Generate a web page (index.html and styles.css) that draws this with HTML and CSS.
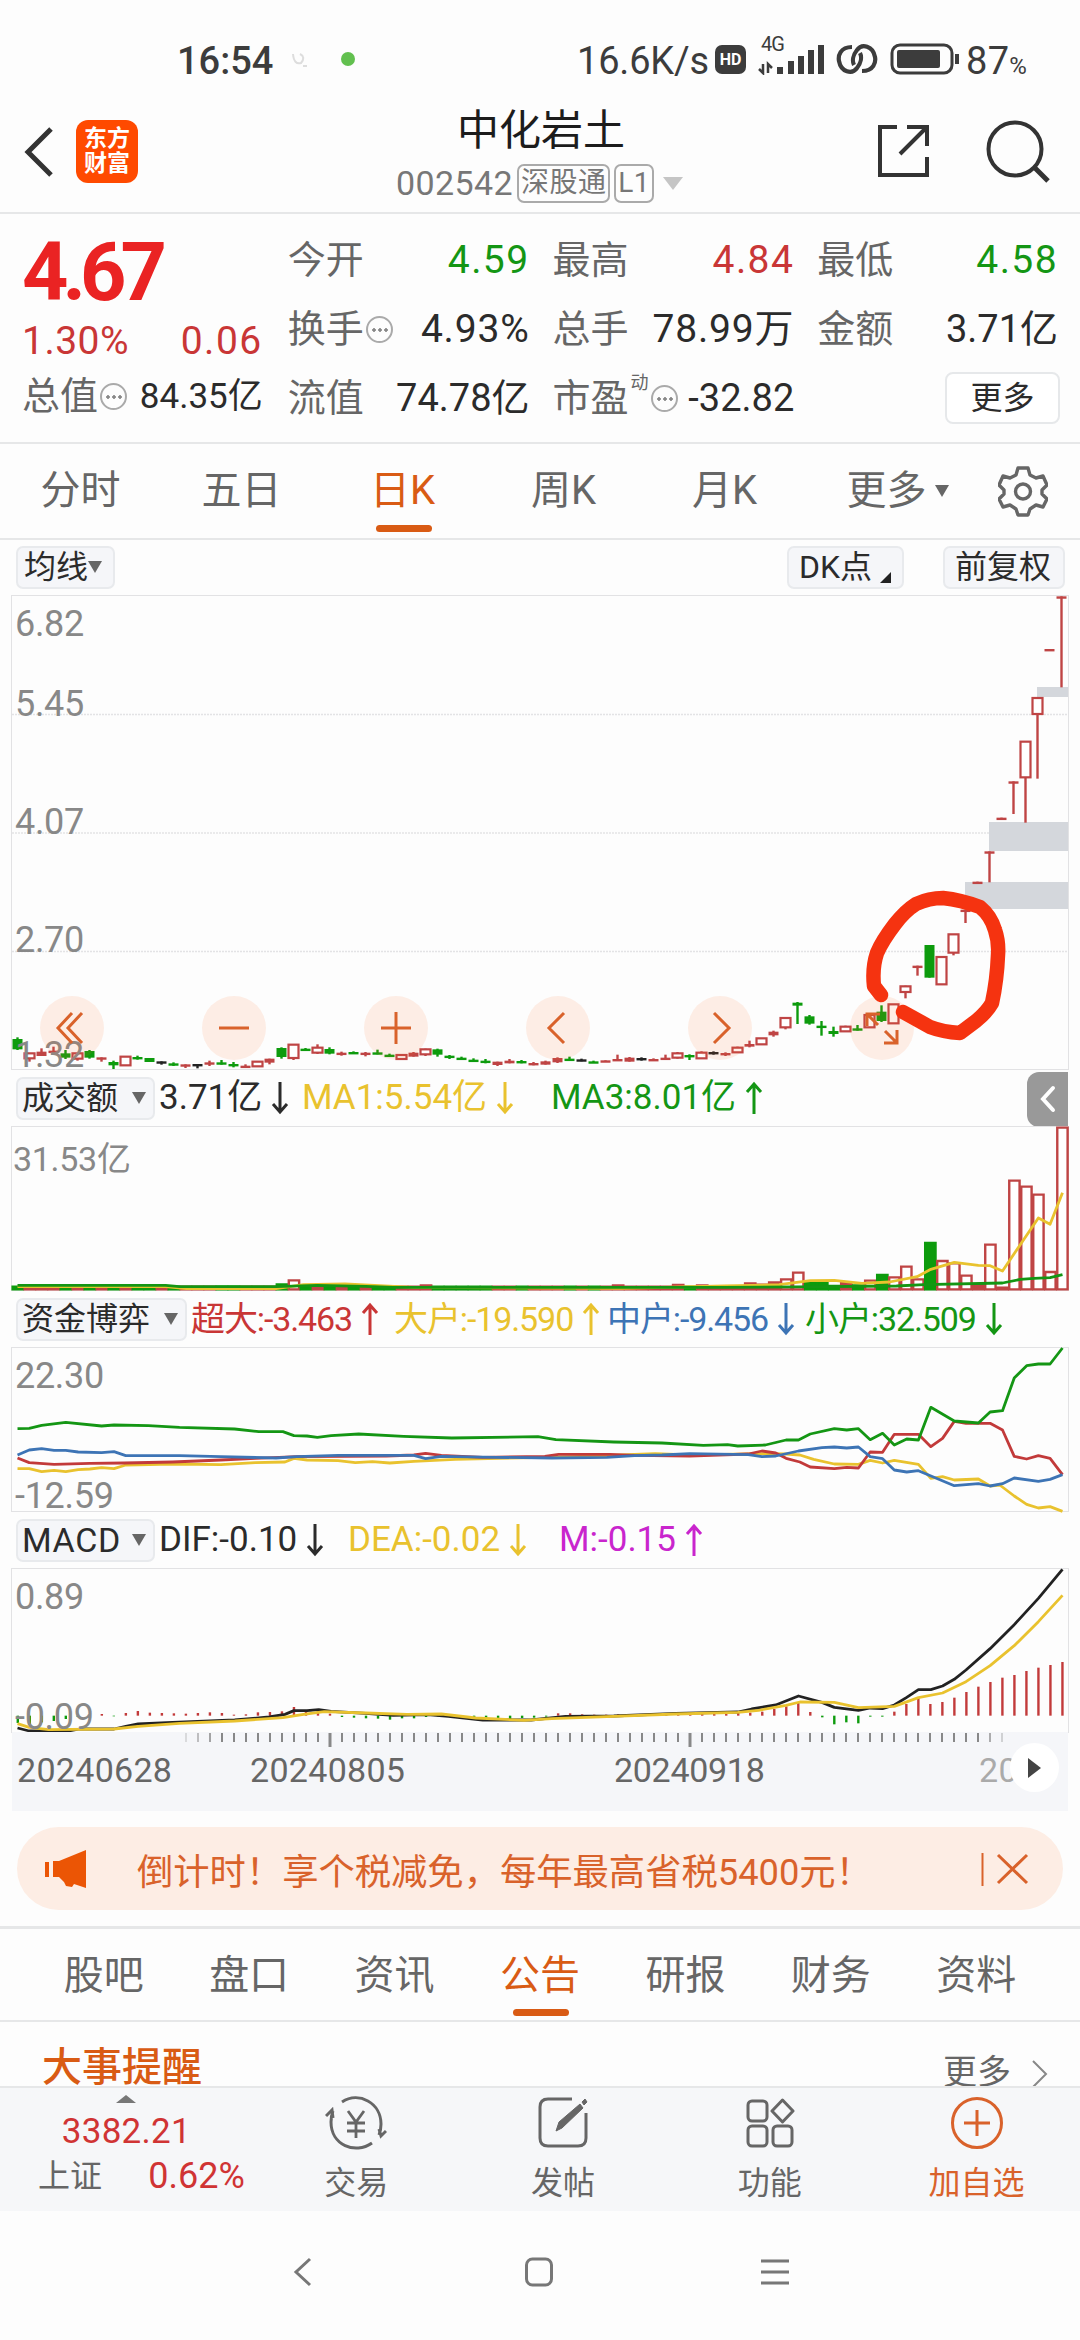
FILE: index.html
```html
<!DOCTYPE html>
<html lang="zh-CN">
<head>
  <meta charset="UTF-8" />
  <meta name="viewport" content="width=device-width, initial-scale=1.0"/>
  <title>中化岩土 002542</title>
  <link rel="stylesheet" href="styles.css">
</head>
<body>

<svg class="defs" width="0" height="0">
  <symbol id="down" viewBox="0 0 18 34"><path d="M9 1v30M2 23l7 8 7-8"/></symbol>
  <symbol id="up" viewBox="0 0 18 34"><path d="M9 33V3M2 11l7-8 7 8"/></symbol>
</svg>

<!-- System status -->
<div class="status-bar">
  <span class="clock">16:54</span>
  <svg class="status-dots" width="70" height="30" viewBox="0 0 70 30">
    <path d="M7 9 Q8 20 15 18 Q20 12 14 9 M17 21h4" fill="none" stroke="#ddd" stroke-width="2"/>
    <circle cx="62" cy="14" r="7" fill="#62c04f"/>
  </svg>
  <span class="speed">16.6K/s</span>
  <span class="hd">HD</span>
  <div class="signal">
    <span>4G</span>
    <svg width="68" height="32" viewBox="0 0 68 32">
      <path d="M5 21v9l-4-4M10 30v-9l4 4" fill="none" stroke="#3c3c3c" stroke-width="2.5"/>
      <path d="M22 31v-7M33 31V18M43 31V13M53 31V7M63 31V2" fill="none" stroke="#3c3c3c" stroke-width="6"/>
    </svg>
  </div>
  <svg class="link" width="42" height="30" viewBox="0 0 42 30">
    <path d="M16 3C4 3 2 12 3 17 5 28 16 31 21 24 25 19 26 13 24 9M26 27C38 27 40 18 39 13 37 2 26-1 21 6 17 11 16 17 18 21" fill="none" stroke="#3c3c3c" stroke-width="4.2"/>
  </svg>
  <svg class="battery" width="70" height="32" viewBox="0 0 70 32">
    <rect x="2" y="2" width="60" height="28" rx="8" fill="none" stroke="#3c3c3c" stroke-width="3"/>
    <rect x="7" y="7" width="43" height="18" rx="2" fill="#3c3c3c"/>
    <path d="M67 11v10" stroke="#3c3c3c" stroke-width="4"/>
  </svg>
  <span class="percent">87<small>%</small></span>
</div>

<!-- Stock title -->
<div class="header">
  <svg class="back" width="36" height="56" viewBox="0 0 36 56">
    <path d="M30 5 7 28l23 23" fill="none" stroke="#333" stroke-width="5"/>
  </svg>
  <div class="logo"><span>东方</span><span>财富</span></div>
  <div class="title">
    <h1>中化岩土</h1>
    <div class="code">
      <span>002542</span><span class="tag">深股通</span><span class="tag">L1</span><i class="tri tri-light"></i>
    </div>
  </div>
  <svg class="share" width="56" height="56" viewBox="0 0 56 56">
    <path d="M21 4H4v48h47V34M31 4h20v19M51 4 24 31" fill="none" stroke="#333" stroke-width="4"/>
  </svg>
  <svg class="search" width="66" height="66" viewBox="0 0 66 66">
    <circle cx="29" cy="30" r="26.5" fill="none" stroke="#333" stroke-width="4"/>
    <path d="M48 48 62 62" stroke="#333" stroke-width="5"/>
  </svg>
</div>

<!-- Quote numbers -->
<div class="quote">
  <div class="price">
    <strong>4.67</strong>
    <div class="change"><span>1.30%</span><span>0.06</span></div>
    <div class="cell small"><label>总值</label><i class="more-dot"></i><b>84.35亿</b></div>
  </div>
  <div class="col">
    <div class="cell"><label>今开</label><b class="down">4.59</b></div>
    <div class="cell"><label>换手</label><i class="more-dot"></i><b>4.93%</b></div>
    <div class="cell"><label>流值</label><b class="tight">74.78亿</b></div>
  </div>
  <div class="col">
    <div class="cell"><label>最高</label><b class="up">4.84</b></div>
    <div class="cell"><label>总手</label><b>78.99万</b></div>
    <div class="cell"><label>市盈</label><sup>动</sup><i class="more-dot"></i><b class="tight">-32.82</b></div>
  </div>
  <div class="col last">
    <div class="cell"><label>最低</label><b class="down">4.58</b></div>
    <div class="cell"><label>金额</label><b class="tight">3.71亿</b></div>
    <div class="cell"><button class="more-btn">更多</button></div>
  </div>
</div>

<div class="period-tabs">
  <span>分时</span>
  <span>五日</span>
  <span class="active">日K</span>
  <span>周K</span>
  <span>月K</span>
  <span>更多<i class="tri"></i></span>
  <svg width="50" height="52" viewBox="0 0 50 52">
    <path d="M20 3h10l2 7 6 3 7-2 4 9-5 5v4l5 5-4 8-7-2-6 4-2 6H20l-2-6-6-4-7 2-4-8 5-5v-4l-5-5 4-9 7 2 6-3z" fill="none" stroke="#666" stroke-width="3.4" stroke-linejoin="round"/>
    <circle cx="25" cy="26.5" r="7.5" fill="none" stroke="#666" stroke-width="3.4"/>
  </svg>
</div>

<div class="tools">
  <button class="chip">均线<i class="tri"></i></button>
  <button class="chip dk">DK点<i class="corner"></i></button>
  <button class="chip fq">前复权</button>
</div>

<!-- Candles -->
<div class="chart kline">
  <svg id="kline" width="1056" height="473"></svg>
  <div class="y-labels">
    <span>6.82</span><span>5.45</span><span>4.07</span><span>2.70</span><span>1.32</span>
  </div>
  <div class="chart-buttons">
    <svg viewBox="0 0 64 64"><path d="M32 17 18 32l14 15M42 17 28 32l14 15"/></svg>
    <svg viewBox="0 0 64 64"><path d="M17 32h30"/></svg>
    <svg viewBox="0 0 64 64"><path d="M17 32h30M32 16v32"/></svg>
    <svg viewBox="0 0 64 64"><path d="M38 17 23 32l15 15"/></svg>
    <svg viewBox="0 0 64 64"><path d="M26 17l15 15-15 15"/></svg>
    <svg viewBox="0 0 64 64"><path d="M28 29 17 18M17 30V18h13M35 35l12 12M47 34v13H34"/></svg>
  </div>
  <svg class="marker" width="1056" height="473" viewBox="12 596 1056 473">
    <path d="M881 995 874 986Q872 968 877 953 882 941 895 924 905 911 916 904 929 898 943 898 961 900 980 907 991 916 995 930 999 942 998 955 997 980 992 1003 987 1012 976 1021L960 1033Q943 1032 930 1027L903 1012"/>
  </svg>
</div>

<!-- Turnover -->
<div class="indicator">
  <button class="chip">成交额<i class="tri"></i></button>
  <span class="v1">3.71亿<svg><use href="#down"/></svg></span>
  <span class="v2 yellow">MA1:5.54亿<svg><use href="#down"/></svg></span>
  <span class="v3 green">MA3:8.01亿<svg><use href="#up"/></svg></span>
  <div class="handle">
    <svg width="20" height="30" viewBox="0 0 20 30"><path d="M15 4 5 15l10 11" fill="none" stroke="#fff" stroke-width="4" stroke-linecap="round"/></svg>
  </div>
</div>
<div class="chart">
  <svg id="volume" width="1056" height="163" viewBox="17 51 1532 489" preserveAspectRatio="none">
    <g id="volumeBars"></g>
    <polyline class="line yellow-line" points="25,530 240,530 270,536 400,536 440,524 500,522 550,527 600,532 900,535 1050,528 1130,524 1175,512 1210,511 1250,520 1290,516 1330,500 1350,478 1384,457 1419,466 1436,467 1454,483 1506,324 1523,343 1541,248"/>
    <polyline class="line green-line" points="25,526 240,526 260,530 400,530 460,526 530,529 570,532 1050,532 1200,530 1300,528 1340,524 1454,519 1480,508 1500,505 1523,503 1541,494"/>
  </svg>
  <div class="y-labels turnover"><span>31.53亿</span></div>
</div>

<!-- Capital flow -->
<div class="indicator flow">
  <button class="chip">资金博弈<i class="tri"></i></button>
  <span class="f1 red">超大:-3.463<svg><use href="#up"/></svg></span>
  <span class="f2 yellow">大户:-19.590<svg><use href="#up"/></svg></span>
  <span class="f3 blue">中户:-9.456<svg><use href="#down"/></svg></span>
  <span class="f4 green">小户:32.509<svg><use href="#down"/></svg></span>
</div>
<div class="chart">
  <svg width="1056" height="163" viewBox="17 24 1532 489" preserveAspectRatio="none">
    <polyline class="line yellow-line" points="25,386 42,386 60,395 78,391 95,395 113,389 130,387 147,383 165,386 182,375 250,372 320,374 370,368 413,366 426,355 445,360 490,362 515,368 540,365 565,369 600,364 660,358 790,352 830,350 900,345 950,341 1000,345 1050,343 1100,341 1140,342 1160,345 1180,358 1210,372 1245,373 1262,361 1280,369 1297,361 1332,373 1350,415 1367,410 1384,420 1419,417 1436,438 1450,435 1471,468 1489,493 1506,504 1523,500 1541,514"/>
    <polyline class="line red-line" points="25,354 42,368 78,373 130,370 180,369 250,366 320,360 370,355 430,350 500,349 560,348 600,345 617,340 640,346 700,352 790,349 810,343 885,343 920,346 1000,348 1085,342 1105,333 1125,339 1140,355 1160,366 1175,381 1210,386 1228,382 1245,384 1262,336 1280,337 1297,283 1332,283 1350,320 1367,295 1384,244 1401,250 1436,250 1454,270 1471,349 1489,357 1506,347 1523,355 1541,404"/>
    <polyline class="line blue-line" points="25,345 42,330 60,326 78,331 95,331 113,336 147,338 165,335 182,347 260,347 320,350 400,354 430,350 490,346 560,346 600,346 617,356 640,349 720,352 800,354 880,352 920,347 960,345 1000,341 1085,344 1105,350 1125,348 1158,333 1192,323 1210,321 1228,324 1245,321 1262,350 1280,356 1297,390 1315,396 1332,392 1384,437 1419,431 1436,438 1454,431 1471,414 1506,424 1523,418 1541,404"/>
    <polyline class="line green-line" points="25,266 42,265 60,256 95,247 147,258 165,255 215,257 260,262 340,267 375,275 410,275 426,287 445,288 460,292 480,287 520,282 585,289 655,294 780,290 806,299 890,306 960,309 1020,316 1055,314 1070,318 1110,315 1140,300 1158,300 1175,282 1210,266 1228,270 1245,266 1262,299 1280,280 1297,315 1315,297 1332,300 1350,202 1384,243 1419,249 1436,216 1454,212 1471,114 1489,77 1506,72 1523,72 1541,24"/>
  </svg>
  <div class="y-labels two"><span>22.30</span><span>-12.59</span></div>
</div>

<!-- MACD -->
<div class="indicator macd">
  <button class="chip">MACD<i class="tri"></i></button>
  <span class="m1">DIF:-0.10<svg><use href="#down"/></svg></span>
  <span class="m2 yellow">DEA:-0.02<svg><use href="#down"/></svg></span>
  <span class="m3 magenta">M:-0.15<svg><use href="#up"/></svg></span>
</div>
<div class="chart">
  <svg width="1056" height="163" viewBox="17 58 1532 489" preserveAspectRatio="none">
    <g id="macdBars"></g>
    <polyline class="line black-line" points="25,535 42,544 100,544 115,538 165,538 182,530 200,523 250,518 340,511 390,502 413,494 426,483 445,483 462,480 480,485 530,491 570,497 620,495 650,500 700,511 770,511 820,500 890,499 980,491 1070,487 1090,478 1125,466 1158,439 1192,458 1210,473 1245,482 1262,475 1280,477 1297,466 1315,443 1332,420 1350,420 1367,409 1384,389 1401,361 1436,297 1471,225 1506,146 1541,59"/>
    <polyline class="line yellow-line" points="25,522 42,533 70,540 165,538 200,530 260,521 340,514 410,504 440,494 470,486 530,490 590,494 640,493 690,505 760,512 800,507 890,500 980,493 1070,488 1100,482 1140,467 1160,457 1210,458 1245,474 1297,470 1332,444 1367,430 1401,396 1436,348 1471,288 1506,216 1541,137"/>
  </svg>
  <div class="y-labels two"><span>0.89</span><span>-0.09</span></div>
</div>
<div class="axis">
  <svg id="ticks" width="1056" height="16"></svg>
  <div class="dates">
    <span>20240628</span><span>20240805</span><span>20240918</span><span class="next">20</span>
  </div>
  <div class="play"><i></i></div>
</div>

<div class="promo">
  <svg width="42" height="40" viewBox="0 0 42 40">
    <path d="M2 13v15" stroke="#eb5505" stroke-width="4"/>
    <path d="M8 12h6L41 1v38l-12-4-2 3-6-1-2-4-5-5H8z" fill="#eb5505"/>
  </svg>
  <span>倒计时！享个税减免，每年最高省税5400元！</span>
  <svg class="close" width="50" height="36" viewBox="0 0 50 36">
    <path d="M1.5 2v33" stroke="#d9622b" stroke-width="2"/>
    <path d="M17 4l29 28M46 4 17 32" stroke="#d9622b" stroke-width="3"/>
  </svg>
</div>

<div class="info-tabs">
  <span>股吧</span>
  <span>盘口</span>
  <span>资讯</span>
  <span class="active">公告</span>
  <span>研报</span>
  <span>财务</span>
  <span>资料</span>
</div>

<div class="events">
  <h2>大事提醒</h2>
  <span>更多</span>
  <svg width="20" height="32" viewBox="0 0 20 32"><path d="M3 3l13 13L3 29" fill="none" stroke="#888" stroke-width="2"/></svg>
</div>

<div class="bottom-bar">
  <div class="index">
    <i></i>
    <strong>3382.21</strong>
    <div><span>上证</span><b>0.62%</b></div>
  </div>
  <div class="item">
    <svg width="62" height="56" viewBox="0 0 62 56">
      <path d="M17 7C34-4 56 8 56 29q0 6-2 11M47 48C30 60 6 50 6 27q0-6 2-11M1 21l6-6 1 8M61 36l-5 5-2-7" fill="none" stroke="#666" stroke-width="3"/>
      <path d="M23 16l8 11 8-11M31 27v16M22 28h18M22 36h18" fill="none" stroke="#666" stroke-width="2.8"/>
    </svg>
    <span>交易</span>
  </div>
  <div class="item">
    <svg width="54" height="56" viewBox="0 0 54 56">
      <path d="M36 4H12q-8 0-8 8v31q0 8 8 8h30q8 0 8-8V18" fill="none" stroke="#666" stroke-width="3"/>
      <path d="M20 36l3-9L44 9l3 4-21 20zM46 7l3-3 2 3-3 3z" fill="#666" stroke="#666"/>
    </svg>
    <span>发帖</span>
  </div>
  <div class="item">
    <svg width="50" height="56" viewBox="0 0 50 56" fill="none" stroke="#666" stroke-width="3">
      <rect x="3" y="6" width="19" height="20" rx="4"/>
      <rect x="3" y="31" width="19" height="20" rx="4"/>
      <rect x="28" y="31" width="19" height="20" rx="4"/>
      <path d="M37.5 5 48 16 37.5 27 27 16z" stroke-linejoin="round"/>
    </svg>
    <span>功能</span>
  </div>
  <div class="item add">
    <svg width="54" height="56" viewBox="0 0 54 56" fill="none" stroke="#d9622b" stroke-width="3">
      <circle cx="27" cy="28" r="24.5"/>
      <path d="M14 28h26M27 15v26"/>
    </svg>
    <span>加自选</span>
  </div>
</div>

<div class="system-nav">
  <svg width="20" height="30" viewBox="0 0 20 30"><path d="M17 2 3 15l14 13"/></svg>
  <svg width="28" height="30" viewBox="0 0 28 30"><rect x="1.5" y="2" width="25" height="26" rx="6"/></svg>
  <svg width="28" height="30" viewBox="0 0 28 30"><path d="M0 4h28M0 15h28M0 26h28"/></svg>
</div>

<script src="script.js"></script>
</body>
</html>
```
FILE: styles.css
```css
:root {
  --orange: #d9622b;
  --red: #c93636;
  --green: #149614;
  --yellow: #e9c22e;
  --blue: #3d74b5;
  --text: #2b2b2b;
  --muted: #666;
  --line: #e6e7e8;
  --soft: #f5f6f9;
}

* { box-sizing: border-box; }

body {
  margin: 0;
  width: 1080px;
  height: 2340px;
  overflow: hidden;
  background: #fdfdfd;
  color: var(--text);
  font-family: Roboto, "Noto Sans CJK SC", sans-serif;
}

svg { display: block; flex: none; }
i { font-style: normal; }
b { font-weight: 400; }
h1, h2 { margin: 0; font-weight: 400; }
button { font-family: inherit; color: inherit; padding: 0; }
.defs { position: absolute; }

.red, .up { color: var(--red); }
.green, .down { color: var(--green); }
.yellow { color: var(--yellow); }
.blue { color: var(--blue); }
.magenta { color: #c925cd; }

.tri {
  display: inline-block;
  border: 7px solid transparent;
  border-top: 12px solid var(--muted);
  border-bottom: 0;
}

/* Status bar */
.status-bar {
  height: 110px;
  padding: 11px 0 0 177px;
  display: flex;
  align-items: center;
  font-size: 38px;
  color: #3c3c3c;
  white-space: nowrap;
}
.clock { width: 109px; font-weight: 500; }
.status-dots { margin-top: -2px; }
.speed { margin-left: 221px; width: 138px; letter-spacing: -0.2px; }
.hd {
  width: 31px;
  height: 29px;
  margin-top: -3px;
  border-radius: 7px;
  background: #3c3c3c;
  color: #fff;
  font-size: 16px;
  font-weight: 700;
  line-height: 30px;
  text-align: center;
}
.signal { width: 90px; height: 40px; padding-left: 12px; margin-top: -13px; }
.signal span { display: block; height: 9px; font-size: 20px; line-height: 20px; letter-spacing: -1px; margin-left: 3px; }
.link { margin-top: -3px; }
.battery { margin: -3px 0 0 12px; }
.percent { margin-left: 6px; letter-spacing: 0.3px; }
.percent small { font-size: 24px; }

/* Header */
.header {
  height: 104px;
  border-bottom: 2px solid var(--line);
  display: flex;
  align-items: flex-start;
}
.back { margin: 14px 0 0 21px; }
.logo {
  width: 62px;
  height: 63px;
  margin: 10px 0 0 19px;
  padding-top: 6px;
  border-radius: 12px;
  background: #ff4a00;
  color: #fff;
  display: flex;
  flex-direction: column;
  align-items: center;
  font-size: 23px;
  font-weight: 700;
  line-height: 25px;
}
.title { width: 540px; margin-left: 133px; text-align: center; }
.title h1 { font-size: 42px; line-height: 42px; color: #1c1c1c; }
.code {
  height: 40px;
  margin: 11px 0 0 -3px;
  display: flex;
  align-items: center;
  justify-content: center;
  font-size: 34px;
  letter-spacing: 0.4px;
  color: #777;
}
.code .tag {
  height: 39px;
  margin-left: 4px;
  padding: 0 2px;
  border: 2px solid #aaa;
  border-radius: 7px;
  font-size: 28px;
  line-height: 34px;
}
.code .tri-light { margin-left: 9px; border-width: 13px 10px 0; border-top-color: #c5c5c5; }
.share { margin: 13px 0 0 65px; }
.search { margin: 9px 0 0 54px; }

/* Quote */
.quote {
  height: 230px;
  padding: 12px 22px 0 22px;
  border-bottom: 2px solid var(--line);
  display: flex;
}
.price { width: 241px; margin-right: 25px; color: var(--red); }
.price strong {
  display: block;
  height: 92px;
  font-size: 81px;
  line-height: 94px;
  letter-spacing: -6px;
  color: #ea2323;
}
.change { height: 44px; display: flex; justify-content: space-between; font-size: 39px; line-height: 46px; letter-spacing: 0.5px; }
.change span + span { letter-spacing: 1.5px; }
.col { width: 242px; margin-right: 23px; }
.col.last { width: 241px; margin: 0; }
.cell {
  height: 69px;
  display: flex;
  align-items: center;
  font-size: 38px;
  line-height: 69px;
  color: var(--text);
}
.cell label { color: var(--muted); }
.cell b { margin-left: auto; font-size: 39px; letter-spacing: 0.8px; }
.cell b.up { color: var(--red); letter-spacing: 1.4px; }
.cell b.down { color: var(--green); letter-spacing: 1.4px; }
.cell b.tight { font-size: 38px; letter-spacing: 0; }
.cell sup { margin: -32px 0 0 2px; font-size: 18px; line-height: 20px; color: var(--muted); }
.cell.small b { font-size: 35px; letter-spacing: 0; }
.more-dot {
  width: 27px;
  height: 27px;
  margin-left: 2px;
  border: 2px solid #aaa;
  border-radius: 50%;
  background:
    radial-gradient(circle at 6px 12px, #888 1.5px, transparent 2px),
    radial-gradient(circle at 12px 12px, #888 1.5px, transparent 2px),
    radial-gradient(circle at 18px 12px, #888 1.5px, transparent 2px);
}
.more-btn {
  width: 115px;
  height: 52px;
  margin: -2px -2px 0 auto;
  border: 2px solid #e6e8ea;
  border-radius: 8px;
  background: #fff;
  font-size: 32px;
  line-height: 48px;
}

/* Period tabs */
.period-tabs {
  height: 96px;
  border-bottom: 2px solid var(--line);
  display: grid;
  grid-template-columns: repeat(6, 161px) 1fr;
  align-items: center;
  text-align: center;
  font-size: 40px;
  line-height: 94px;
  color: var(--muted);
}
.period-tabs .tri { margin: 0 -24px 7px 8px; }
.period-tabs svg { margin-left: 32px; }
.active { color: #d95b14; position: relative; }
.active::after {
  content: '';
  position: absolute;
  left: 50%;
  bottom: 6px;
  width: 56px;
  height: 7px;
  margin-left: -27px;
  border-radius: 4px;
  background: #d95b14;
}

.chip {
  height: 43px;
  padding: 0 8px 0 7px;
  border: 2px solid #e8eaed;
  border-radius: 7px;
  background: var(--soft);
  display: flex;
  align-items: center;
  font-size: 32px;
  line-height: 38px;
  white-space: nowrap;
}
.tools { height: 56px; padding: 0 15px 2px 16px; display: flex; align-items: center; }
.tools .chip { width: 99px; padding: 0 6px; }
.tools .dk { width: 117px; margin-left: auto; padding: 0 10px; }
.tools .fq { width: 122px; margin-left: 39px; padding: 0 10px; }
.corner {
  margin: 20px 0 0 8px;
  border-left: 11px solid transparent;
  border-bottom: 11px solid #222;
}

/* Charts */
.chart { width: 1056px; height: 163px; margin-left: 12px; position: relative; box-shadow: 0 0 0 1px #e2e2e4; }
.kline { height: 473px; }
.chart > svg { overflow: visible; }
.line { fill: none; stroke-width: 2.8; vector-effect: non-scaling-stroke; stroke-linejoin: round; }
.yellow-line { stroke: var(--yellow); }
.green-line { stroke: #149614; }
.red-line { stroke: #c23a3a; }
.blue-line { stroke: #3d74b5; }
.black-line { stroke: #222; }

.y-labels {
  position: absolute;
  top: 10px;
  left: 3px;
  font-size: 36px;
  line-height: 36px;
  letter-spacing: -0.3px;
  color: #888;
}
.y-labels span { display: block; }
.kline .y-labels span + span { margin-top: 82px; }
.kline .y-labels span:nth-child(2) { margin-top: 44px; }
.kline .y-labels span:last-child { margin-top: 79px; }
.y-labels.turnover { top: 14px; left: 1px; font-size: 34px; }
.two span + span { margin-top: 84px; }

.chart-buttons {
  position: absolute;
  top: 400px;
  left: 28px;
  width: 874px;
  display: flex;
  justify-content: space-between;
}
.chart-buttons svg {
  width: 64px;
  height: 64px;
  border-radius: 50%;
  background: rgba(255, 110, 40, 0.11);
  fill: none;
  stroke: var(--orange);
  stroke-width: 3;
}
.marker { position: absolute; top: 0; left: 0; fill: none; stroke: #f53310; stroke-width: 14.5; stroke-linecap: round; stroke-linejoin: round; }

.indicator {
  height: 58px;
  padding-left: 16px;
  display: flex;
  align-items: center;
  font-size: 35px;
  line-height: 46px;
  white-space: nowrap;
}
.indicator .chip { width: 139px; margin-right: 4px; justify-content: space-between; padding: 0 7px 0 4px; }
.indicator span { display: flex; align-items: center; }
.indicator span svg { width: 18px; height: 34px; margin-left: 9px; fill: none; stroke: currentColor; stroke-width: 3; }
.v1 { width: 143px; }
.v2 { width: 249px; }
.handle {
  width: 41px;
  height: 55px;
  margin: 2px 12px 0 auto;
  border-radius: 12px 0 0 12px;
  background: #999;
  display: flex;
  align-items: center;
  justify-content: center;
}
.flow { font-size: 34px; letter-spacing: -1.1px; }
.flow .chip { width: 171px; letter-spacing: 0; }
.f1 { width: 203px; }
.f2 { width: 213px; }
.f3 { width: 198px; }
.macd .chip { font-size: 34px; letter-spacing: 0.6px; }
.m1 { width: 189px; }
.m2 { width: 211px; }

.axis { width: 1056px; height: 79px; margin-left: 12px; background: var(--soft); position: relative; }
.dates { display: flex; font-size: 34px; line-height: 40px; letter-spacing: 0.3px; color: var(--muted); padding: 2px 0 0 5px; }
.dates span { width: 233px; }
.dates span:nth-child(2) { width: 364px; }
.dates span:nth-child(3) { width: 365px; letter-spacing: -0.3px; }
.dates .next { width: 42px; color: #aaa; }
.play {
  position: absolute;
  top: 11px;
  right: 9px;
  width: 49px;
  height: 49px;
  border-radius: 50%;
  background: #fff;
  display: flex;
  align-items: center;
  justify-content: center;
}
.play i { border: 10px solid transparent; border-left: 13px solid #444; border-right: 0; }

/* Promo */
.promo {
  width: 1046px;
  height: 83px;
  margin: 16px 0 0 17px;
  padding: 0 32px 0 28px;
  border-radius: 42px;
  background: #fdede4;
  display: flex;
  align-items: center;
  font-size: 36.3px;
  color: var(--orange);
  white-space: nowrap;
}
.promo span { margin-left: 50px; }
.promo .close { margin-left: auto; }

/* Info tabs */
.info-tabs {
  height: 96px;
  margin-top: 16px;
  padding: 0 31px;
  border-top: 3px solid var(--line);
  border-bottom: 2px solid var(--line);
  display: grid;
  grid-template-columns: repeat(7, 1fr);
  text-align: center;
  font-size: 40px;
  line-height: 93px;
  color: var(--muted);
}

.events { height: 64px; padding: 28px 30px 0 42px; display: flex; }
.events h2 { font-size: 40px; line-height: 36px; font-weight: 500; color: #d95b14; }
.events span { margin-left: auto; font-size: 34px; line-height: 44px; color: var(--muted); }
.events svg { margin: 8px 0 0 19px; }

/* Bottom bar */
.bottom-bar {
  height: 125px;
  border-top: 2px solid var(--line);
  background: #f6f7f9;
  display: flex;
  position: relative;
}
.index { width: 253px; text-align: center; color: #d03434; }
.index > i { display: block; width: 0; margin: 7px auto 0; border: 10px solid transparent; border-top: 0; border-bottom: 8px solid #777; }
.index strong { display: block; margin-top: 8px; font-size: 35px; line-height: 42px; font-weight: 400; letter-spacing: 0.3px; }
.index div { display: flex; justify-content: space-between; padding: 0 8px 0 38px; font-size: 36px; line-height: 46px; }
.index div span { font-size: 32px; color: var(--muted); }
.item {
  width: 207px;
  padding-top: 7px;
  display: flex;
  flex-direction: column;
  align-items: center;
  font-size: 32px;
  line-height: 40px;
  color: var(--muted);
}
.item span { margin-top: 12px; }
.item.add { color: var(--orange); }

.system-nav { height: 129px; padding: 46px 0 0 293px; display: flex; }
.system-nav svg { fill: none; stroke: #777; stroke-width: 3; }
.system-nav svg + svg { margin-left: 212px; }
.system-nav svg:last-child { margin-left: 208px; }
```
FILE: script.js
```js
const NS = 'http://www.w3.org/2000/svg';
const STEP = 12;
const COLORS = { r: '#bf4444', g: '#0d9b0d', k: '#222' };

function add(parent, tag, attrs) {
  const el = document.createElementNS(NS, tag);
  for (const key in attrs) el.setAttribute(key, attrs[key]);
  parent.appendChild(el);
}

// color, body top, body bottom, high, low, hollow (y measured in thirds of a pixel from 364px down the chart)
const candles = [
  ['g',237,268,232,270],['r',280,295,280,305,1],['r',275,288,265,288],['r',272,278,260,280],['g',280,293,270,297],
  ['r',280,296,280,302,1],['g',273,293,270,296],['r',292,298,292,305],['g',306,316,302,327],['r',290,316,288,316,1],
  ['g',291,296,287,299],['g',294,306,294,306],['k',304,309,304,314],['g',310,315,307,318],['r',313,319,313,324],
  ['k',312,318,312,325],['r',307,312,302,318],['g',307,314,300,314],['g',312,318,306,322],['r',317,323,313,323],
  ['r',305,319,303,319,1],['r',296,308,296,313],['g',264,291,262,296],['r',254,294,254,300,1],['g',266,271,264,273],
  ['r',263,278,253,282,1],['g',267,281,262,283],['r',278,284,275,287],['g',276,280,274,280],['r',278,284,276,289],
  ['g',277,283,269,283],['g',284,290,281,290],['r',285,297,285,297,1],['r',278,290,276,290],['r',268,283,266,288,1],
  ['g',268,284,266,290],['g',287,292,285,297],['g',293,298,290,300],['g',299,304,295,304],['g',302,307,297,310],
  ['r',305,315,305,318],['r',302,310,297,310],['g',303,310,300,310],['r',309,314,306,316],['r',304,314,302,314],
  ['r',294,307,292,309],['g',296,300,290,303],['k',298,304,296,304],['g',304,309,302,309],['r',301,306,301,306],
  ['r',297,303,284,303],['r',293,305,291,305],['k',294,299,292,302],['r',297,301,295,301],['r',293,299,284,299],
  ['r',280,293,276,296,1],['g',285,290,283,300],['r',278,295,274,297,1],['k',276,281,274,284],['r',279,284,277,288],
  ['r',263,277,260,277,1],['r',252,260,242,262],['r',235,253,235,253,1],['r',215,226,212,230],['r',174,202,172,208,1],
  ['g',128,137,126,192],['g',169,191,165,194],['g',197,201,183,227],['g',213,222,200,230],['r',200,214,197,214,1],
  ['g',205,210,195,212],['r',165,202,163,202,1],['g',155,183,136,186],['r',133,190,133,190,1],['r',79,96,77,115,1],
  ['r',17,22,17,47],['g',-45,53,-45,53],['r',-9,73,-9,73,1],['r',-77,-22,-77,-14,1],['r',-151,-147,-151,-111],
  ['r',-235,-230,-235,-230],['r',-326,-321,-326,-233],['r',-427,-422,-427,-422],['r',-536,-531,-536,-438],['r',-655,-548,-655,-412,1],
  ['r',-786,-738,-786,-544,1],['r',-933,-928,-933,-928],['r',-1091,-1087,-1091,-818]
];

const kline = document.getElementById('kline');
[118.5, 237, 355.5].forEach(y => add(kline, 'path', { d: `M0 ${y}H1056`, stroke: '#e3e3e5', 'stroke-width': 1.5, 'stroke-dasharray': '2 1' }));
[[1025, 91, 10], [977, 226, 29], [953, 286, 27]].forEach(([x, y, h]) =>
  add(kline, 'rect', { x, y, width: 1056 - x, height: h, fill: '#d4d7dc' }));

candles.forEach(([c, top, bottom, high, low, hollow], i) => {
  const x = 5.5 + i * STEP;
  const y = v => 364 + v / 3;
  add(kline, 'path', { d: `M${x} ${y(high)}V${y(low)}`, stroke: COLORS[c], 'stroke-width': 2.4 });
  if (hollow) {
    add(kline, 'rect', { x: x - 5, y: y(top), width: 10, height: y(bottom) - y(top), fill: '#fff', stroke: COLORS[c], 'stroke-width': 2.2 });
  } else {
    add(kline, 'rect', { x: x - 5, y: y(top), width: 10, height: Math.max(2.4, y(bottom) - y(top)), fill: COLORS[c] });
  }
});

// Bars share the stretched grid of their svg: 17.42 units per day
const dayX = i => 25.4 + i * 17.42;

const volume = {
  22: 523, 23: 511, 34: 526, 50: 526, 55: 525, 57: 526, 61: 520, 62: 524, 63: 517, 64: 508, 65: 488, 66: 515, 67: 517, 68: 528, 69: 518,
  70: 526, 71: 512, 72: 495, 73: 502, 74: 470, 75: 508, 76: 399, 77: 453, 78: 460, 79: 497, 80: 525,
  81: 404, 82: 533, 83: 212, 84: 230, 85: 254, 86: 486, 87: 53
};
const bars = document.getElementById('volumeBars');
candles.forEach(([c], i) => {
  const top = volume[i] || 530;
  const color = c === 'g' && i !== 65 ? '#0d9b0d' : '#bf4444';
  const fill = color === '#0d9b0d' || top > 512 ? color : '#fff';
  add(bars, 'rect', { x: dayX(i) - 7.5, y: top, width: 15, height: 538 - top, fill, stroke: color, 'stroke-width': 2.4, 'vector-effect': 'non-scaling-stroke' });
});

const macd = [
  520,526,518,514,508,502,499,493,500,490,484,489,490,491,492,490,488,490,495,494,488,487,485,472,481,485,492,
  502,504,506,507,510,506,506,502,500,501,504,505,507,506,508,505,504,501,491,491,494,495,495,494,493,494,494,
  492,492,491,492,491,491,489,489,486,478,470,459,487,503,524,518,521,501,501,486,463,443,463,457,444,427,411,
  397,384,376,364,354,346,337
];
const macdBars = document.getElementById('macdBars');
macd.forEach((v, i) => add(macdBars, 'path', {
  d: `M${dayX(i)} 498V${v}`, stroke: v > 498 ? '#0d9b0d' : '#c23a3a', 'stroke-width': 2.4, 'vector-effect': 'non-scaling-stroke'
}));

const ticks = document.getElementById('ticks');
for (let x = 174; x <= 990; x += STEP) {
  const major = x === 318 || x === 678;
  const opacity = Math.min(1, (x - 162) / 48, (1002 - x) / 36);
  add(ticks, 'path', { d: `M${x} 1V${major ? 15 : 10}`, stroke: '#888', 'stroke-width': major ? 3 : 2, opacity });
}
```
